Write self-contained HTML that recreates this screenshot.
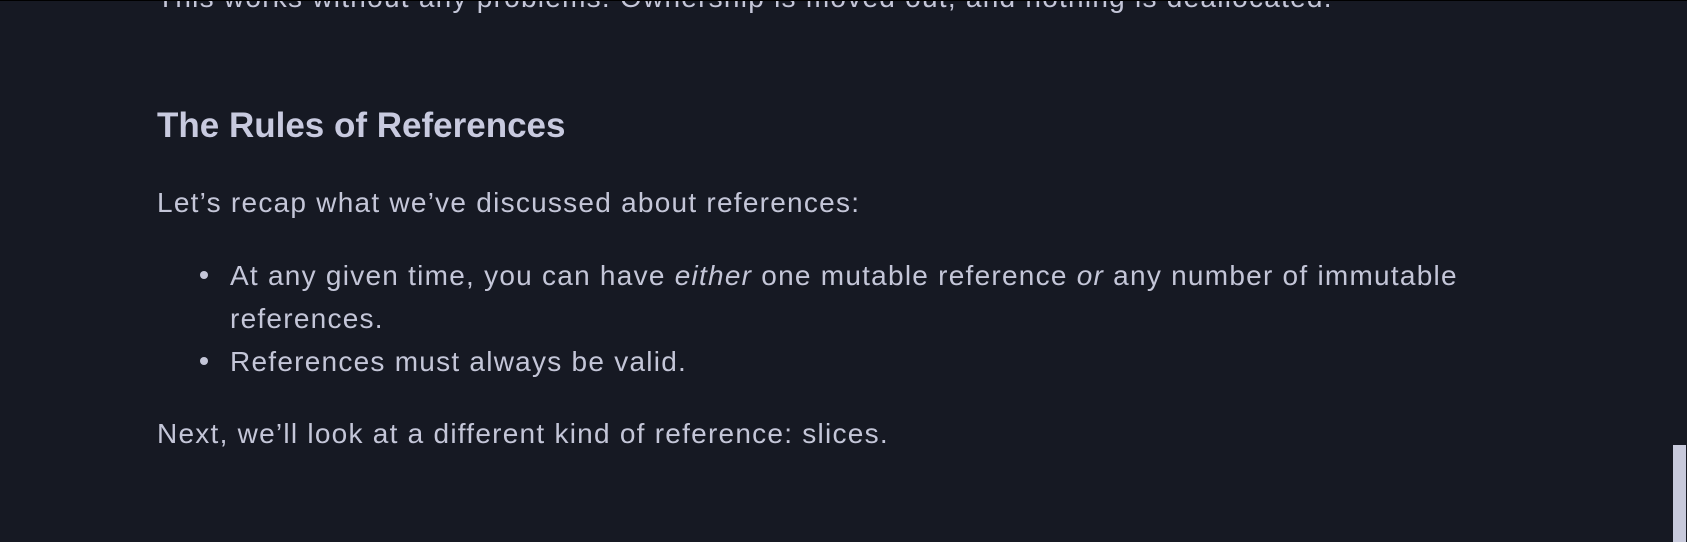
<!DOCTYPE html>
<html><head><meta charset="utf-8"><style>
html,body{margin:0;padding:0;}
body{width:1687px;height:542px;background:#161923;overflow:hidden;position:relative;font-family:"Liberation Sans",sans-serif;color:#c4c6d8;}
.l{position:absolute;left:157px;font-size:28px;letter-spacing:1.25px;line-height:43px;white-space:nowrap;}
.b{left:230px;}
.dot{position:absolute;left:200px;width:8px;height:8px;border-radius:50%;background:#c4c6d8;}
h2{position:absolute;left:157px;top:104px;margin:0;font-size:35px;line-height:44px;font-weight:bold;color:#c8cadf;white-space:nowrap;}
.top{position:absolute;left:0;top:0;width:1687px;height:1px;background:#000;}
.sb{position:absolute;left:1673px;top:445px;width:13px;height:97px;background:#c8cadc;}
</style></head><body>
<div class="l" style="top:-24px">This works without any problems. Ownership is moved out, and nothing is deallocated.</div>
<div class="top"></div>
<h2>The Rules of References</h2>
<div class="l" style="top:181px">Let’s recap what we’ve discussed about references:</div>
<div class="dot" style="top:271px"></div>
<div class="l b" style="top:254px">At any given time, you can have <i>either</i> one mutable reference <i>or</i> any number of immutable</div>
<div class="l b" style="top:297px">references.</div>
<div class="dot" style="top:357px"></div>
<div class="l b" style="top:340px">References must always be valid.</div>
<div class="l" style="top:412px">Next, we’ll look at a different kind of reference: slices.</div>
<div class="sb"></div>
</body></html>
